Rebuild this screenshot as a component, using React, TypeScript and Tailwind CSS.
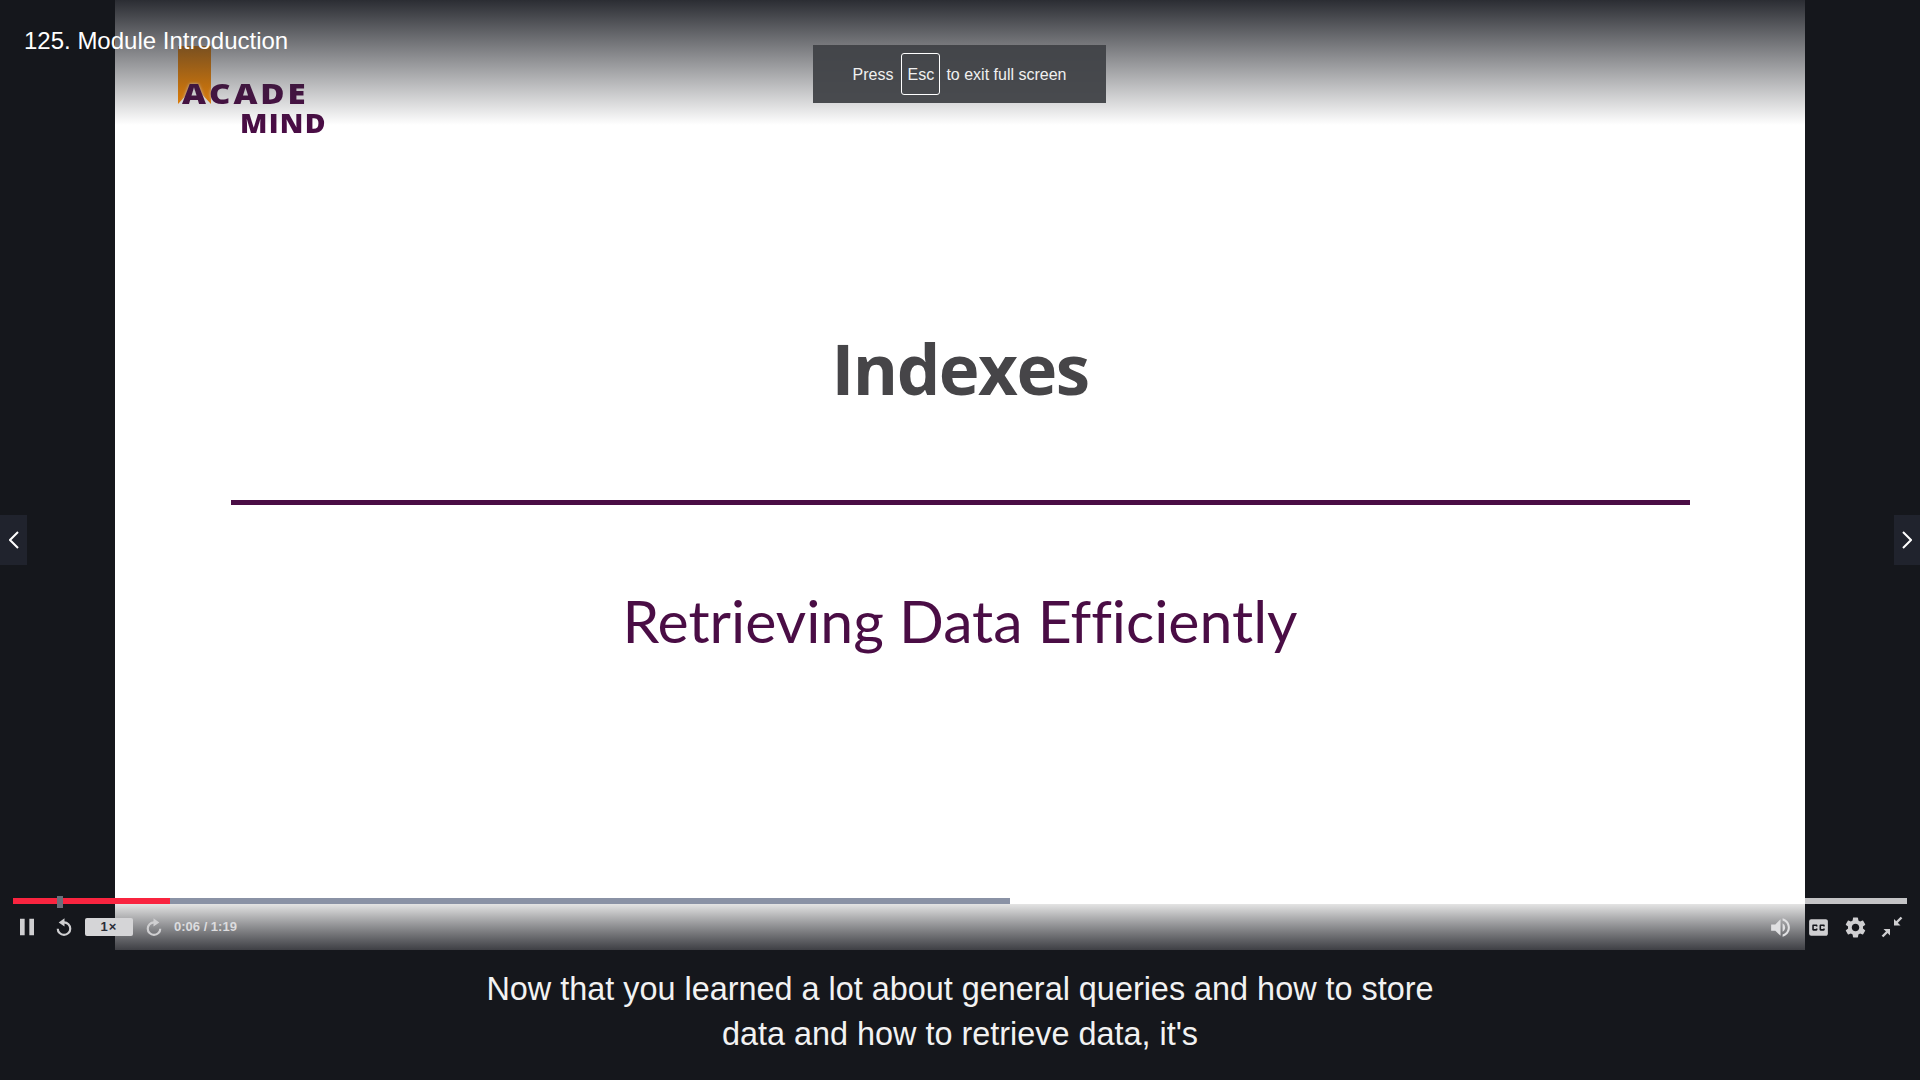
import React from 'react';
import { MdClosedCaption, MdSettings, MdVolumeUp, MdPause } from 'react-icons/md';

const SANS = 'font-["Liberation_Sans",Arial,sans-serif]';

function ReplayIcon({ flip = false }: { flip?: boolean }) {
  return (
    <svg viewBox="0 0 24 24" className={`w-[20px] h-[20px] ${flip ? '-scale-x-100' : ''}`} fill="none" stroke="currentColor">
      <path d="M12 6.5a7.5 7.5 0 1 1-7.5 7.5" strokeWidth="2.6" />
      <path d="M12.6 1.5v10L5.6 6.5z" fill="currentColor" stroke="none" />
    </svg>
  );
}

function ShrinkIcon() {
  return (
    <svg viewBox="0 0 24 24" className="w-[24px] h-[24px]" fill="none" stroke="currentColor" strokeWidth="2.4">
      <path d="M21.5 2.5 15 9" />
      <path d="M14 4v6.5h6.5z" fill="currentColor" stroke="none" />
      <path d="M2.5 21.5 9 15" />
      <path d="M10 20.5V14H3.5z" fill="currentColor" stroke="none" />
    </svg>
  );
}

function Chevron({ right = false }: { right?: boolean }) {
  return (
    <svg viewBox="0 0 10 18" className="w-[10px] h-[18px]" fill="none" stroke="currentColor" strokeWidth="2">
      <path d={right ? 'M1 1l8 8-8 8' : 'M9 1L1 9l8 8'} />
    </svg>
  );
}

function Logo() {
  return (
    <div className="relative w-[160px] h-[96px] ml-[48px] mt-[46px] blur-[0.6px] font-['Open_Sans',sans-serif] font-extrabold text-[#4a0d45]">
      <div className="absolute left-[15px] top-0 w-[33px] h-[58px] bg-[#ff8c00] [clip-path:polygon(0_0,100%_0,100%_100%,50%_70%,0_100%)]" />
      <div className="absolute left-[19px] top-[29px] origin-left scale-x-[1.14] text-[29px] leading-[36px] tracking-[2.6px] whitespace-nowrap [text-shadow:0_0_3px_#fff]">ACADE</div>
      <div className="absolute left-[77px] top-[60px] origin-left scale-x-[1.05] text-[27px] leading-[34px] tracking-[1.2px] whitespace-nowrap">MIND</div>
    </div>
  );
}

export default function App() {
  return (
    <div className={`relative w-full h-screen overflow-hidden bg-[#15171c] text-white ${SANS}`}>
      {/* video frame */}
      <div className="relative h-[950px] flex justify-center">
        <div className="relative w-[1690px] h-full bg-white flex flex-col">
          <Logo />
          <div className="flex flex-col items-center">
            <h1 className="mt-[181px] text-[69px] leading-[90px] font-bold text-[#464548] font-['Open_Sans',sans-serif] tracking-[-1.5px] blur-[0.4px]">Indexes</h1>
            <div className="mt-[87px] w-[1459px] h-[5px] bg-[#4a0d45]" />
            <p className="mt-[80px] text-[59px] leading-[72px] text-[#4a0d45] font-['Lato',sans-serif] [font-variant-ligatures:none] blur-[0.3px]">Retrieving Data Efficiently</p>
          </div>
          {/* udemy watermark */}
          <div className="absolute right-[5px] bottom-[8px] text-[20px] font-bold text-[#6a6a6a]/25 blur-[0.8px]">udemy</div>
          {/* fades over the picture */}
          <div className="absolute inset-x-0 top-0 h-[125px] bg-gradient-to-b from-[#2b2d33] to-transparent" />
          <div className="absolute inset-x-0 bottom-0 h-[46px] bg-gradient-to-t from-[#3f4045] to-[#e4e4e4]" />
        </div>
      </div>

      {/* captions */}
      <div className="flex flex-col items-center pt-[17px] text-[32.4px] leading-[45px] text-[#f2f2f2]">
        <span>Now that you learned a lot about general queries and how to store</span>
        <span>data and how to retrieve data, it's</span>
      </div>

      {/* title */}
      <div className="absolute left-[24px] top-[26px] text-[24px] leading-[30px]">125. Module Introduction</div>

      {/* fullscreen toast */}
      <div className="absolute left-[813px] top-[45px] w-[293px] h-[58px] flex items-center justify-center bg-[#404247]/95 text-[16px] text-[#f0f0f0]">
        <span className="pt-[2px]">Press</span>
        <span className="ml-[8px] mr-[6px] h-[42px] w-[39px] pt-[2px] flex items-center justify-center border border-white rounded-[3px]">Esc</span>
        <span className="pt-[2px]">to exit full screen</span>
      </div>

      {/* prev/next */}
      <div className="absolute left-0 top-[515px] w-[27px] h-[50px] flex items-center justify-center bg-[#20232d]">
        <Chevron />
      </div>
      <div className="absolute right-0 top-[515px] w-[26px] h-[50px] flex items-center justify-center bg-[#20232d]">
        <Chevron right />
      </div>

      {/* player controls */}
      <div className="absolute left-[13px] right-[13px] top-[898px]">
        <div className="relative h-[6px] flex bg-white/75">
          <div className="w-[157px] bg-[#f9243f]" />
          <div className="w-[840px] bg-[#8a92a5]" />
          <div className="absolute left-[44px] -top-[2px] w-[6px] h-[12px] bg-[#6a6f7a]" />
        </div>
        <div className="flex items-center h-[46px] text-[#cfcfd1]">
          <MdPause className="w-[28px] h-[28px] shrink-0" />
          <div className="ml-[13px]"><ReplayIcon /></div>
          <div className="ml-[11px] w-[48px] h-[18px] rounded-[2px] bg-[#d5d5d7] text-[#2a2d37] text-[13px] tracking-[1px] font-bold flex items-center justify-center">1×</div>
          <div className="ml-[11px]"><ReplayIcon flip /></div>
          <span className="ml-[10px] text-[13px] font-bold text-[#dcdcde]">0:06 / 1:19</span>
          <div className="ml-auto flex items-center gap-[12px] pr-[3px]">
            <MdVolumeUp className="w-[25px] h-[25px] text-[#e0e0e2]" />
            <MdClosedCaption className="w-[25px] h-[25px] ml-[1px]" />
            <MdSettings className="w-[25px] h-[25px]" />
            <ShrinkIcon />
          </div>
        </div>
      </div>
    </div>
  );
}
